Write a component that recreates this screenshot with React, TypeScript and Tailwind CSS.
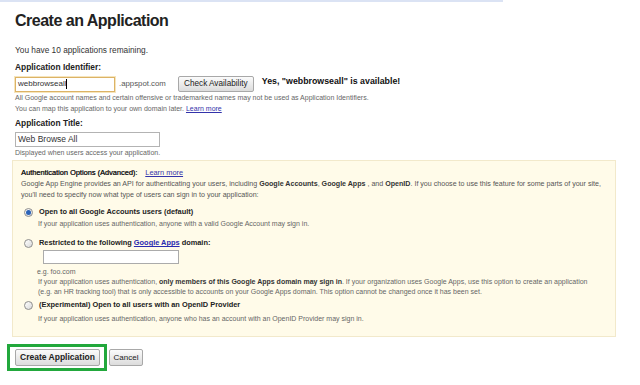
import React from "react";

const Radio = ({ checked }: { checked?: boolean }) => (
  <span className="w-[9px] h-[9px] rounded-full border border-[#8e8e8e] bg-linear-to-br from-white to-[#d9d9d9] flex items-center justify-center shrink-0">
    {checked && <span className="w-[5px] h-[5px] rounded-full bg-[#2b63b8]" />}
  </span>
);

const App: React.FC = () => {
  return (
    <div className="w-[640px] h-[385px] bg-white overflow-hidden font-['Liberation_Sans',Arial,sans-serif] text-[#333]">
      <div className="h-[2px] w-[503px] bg-[#dbe3f4]" />
      <div className="pl-[15px]">
        <h1 className="mt-[9px] text-[16px] leading-[20px] font-bold tracking-[-0.5px] text-[#222]">
          Create an Application
        </h1>
        <p className="mt-[13px] text-[8.3px] leading-[12px]">You have 10 applications remaining.</p>

        <p className="mt-[5px] text-[8.4px] leading-[12px] font-bold text-[#222]">Application Identifier:</p>
        <div className="mt-[3px] h-[16px] flex items-center">
          <div className="w-[100px] h-[15px] border border-[#dcb366] shadow-[0_0_0_1px_#f6e5bd] bg-white flex items-center pl-[2px] text-[8px] text-[#333]">
            webbrowseall<span className="w-px h-[10px] bg-black" />
          </div>
          <span className="ml-[4px] text-[7.8px] text-[#555]">.appspot.com</span>
          <button className="ml-[12px] w-[76px] h-[16px] border border-[#a8a8a8] rounded-[2px] bg-linear-to-b from-[#fbfbfb] to-[#dcdcdc] text-[8.2px] text-[#222] flex items-center justify-center">
            Check Availability
          </button>
          <span className="ml-[8px] self-start leading-[10px] text-[8.8px] font-bold text-[#111]">
            Yes, "webbrowseall" is available!
          </span>
        </div>
        <p className="text-[7px] leading-[11px] text-[#666]">
          All Google account names and certain offensive or trademarked names may not be used as Application Identifiers.
        </p>
        <p className="text-[7px] leading-[11px] text-[#666]">
          You can map this application to your own domain later. <a className="text-[#3333aa] underline">Learn more</a>
        </p>

        <p className="mt-[3px] text-[8.4px] leading-[12px] font-bold text-[#222]">Application Title:</p>
        <div className="mt-[3px] w-[145px] h-[15px] border border-[#b3b3b3] bg-white flex items-center pl-[2px] text-[8.5px] text-[#333]">
          Web Browse All
        </div>
        <p className="mt-[1px] text-[7px] leading-[10px] text-[#666]">Displayed when users access your application.</p>

        <div className="mt-[2px] ml-[-3px] w-[604px] h-[177px] border border-[#f2e9cb] bg-[#fffbe9] pl-[8px] pt-[6px]">
          <p className="text-[7.4px] leading-[12px] text-[#1a1a1a]">
            <span className="[text-shadow:0.35px_0_0_#1a1a1a]">Authentication Options (Advanced):</span>
            <a className="ml-[8px] text-[#3333aa] underline">Learn more</a>
          </p>
          <p className="text-[7.1px] leading-[11px] text-[#555] whitespace-nowrap">
            Google App Engine provides an API for authenticating your users, including <b className="text-[#333]">Google Accounts</b>, <b className="text-[#333]">Google Apps</b> , and <b className="text-[#333]">OpenID</b>. If you choose to use this feature for some parts of your site,
            <br />
            you'll need to specify now what type of users can sign in to your application:
          </p>

          <div className="mt-[5px] pl-[3px] flex items-center gap-[6px] h-[12px]">
            <Radio checked />
            <span className="text-[7.4px] font-bold text-[#222]">Open to all Google Accounts users (default)</span>
          </div>
          <p className="mt-[1px] pl-[17px] text-[7px] leading-[10px] text-[#666]">
            If your application uses authentication, anyone with a valid Google Account may sign in.
          </p>

          <div className="mt-[8px] pl-[3px] flex items-center gap-[6px] h-[12px]">
            <Radio />
            <span className="text-[7.4px] font-bold text-[#222]">
              Restricted to the following <a className="text-[#2a2ab0] underline">Google Apps</a> domain:
            </span>
          </div>
          <div className="mt-[1px] ml-[22px] w-[136px] h-[14px] border border-[#ababab] bg-white" />
          <p className="mt-[3px] pl-[16px] text-[7px] leading-[10px] text-[#666]">e.g. foo.com</p>
          <p className="pl-[17px] text-[7px] leading-[10px] text-[#666] whitespace-nowrap">
            If your application uses authentication, <b className="text-[#333]">only members of this Google Apps domain may sign in</b>. If your organization uses Google Apps, use this option to create an application
            <br />
            (e.g. an HR tracking tool) that is only accessible to accounts on your Google Apps domain. This option cannot be changed once it has been set.
          </p>

          <div className="mt-[2px] pl-[3px] flex items-center gap-[6px] h-[12px]">
            <Radio />
            <span className="text-[7.4px] font-bold text-[#222]">(Experimental) Open to all users with an OpenID Provider</span>
          </div>
          <p className="mt-[3px] pl-[17px] text-[7px] leading-[10px] text-[#666]">
            If your application uses authentication, anyone who has an account with an OpenID Provider may sign in.
          </p>
        </div>

        <div className="mt-[7px] flex items-center">
          <div className="ml-[-8px] border-[3px] border-[#22a83c] pt-[2px] pb-[2px] pl-[5px] pr-[4px]">
            <button className="w-[85px] h-[17px] border border-[#a8a8a8] rounded-[2px] bg-linear-to-b from-[#fbfbfb] to-[#dcdcdc] text-[8.5px] font-bold text-[#222] flex items-center justify-center">
              Create Application
            </button>
          </div>
          <button className="ml-[2px] w-[34px] h-[17px] border border-[#a8a8a8] rounded-[2px] bg-linear-to-b from-[#fbfbfb] to-[#dcdcdc] text-[8px] text-[#222] flex items-center justify-center">
            Cancel
          </button>
        </div>
      </div>
    </div>
  );
};

export default App;
